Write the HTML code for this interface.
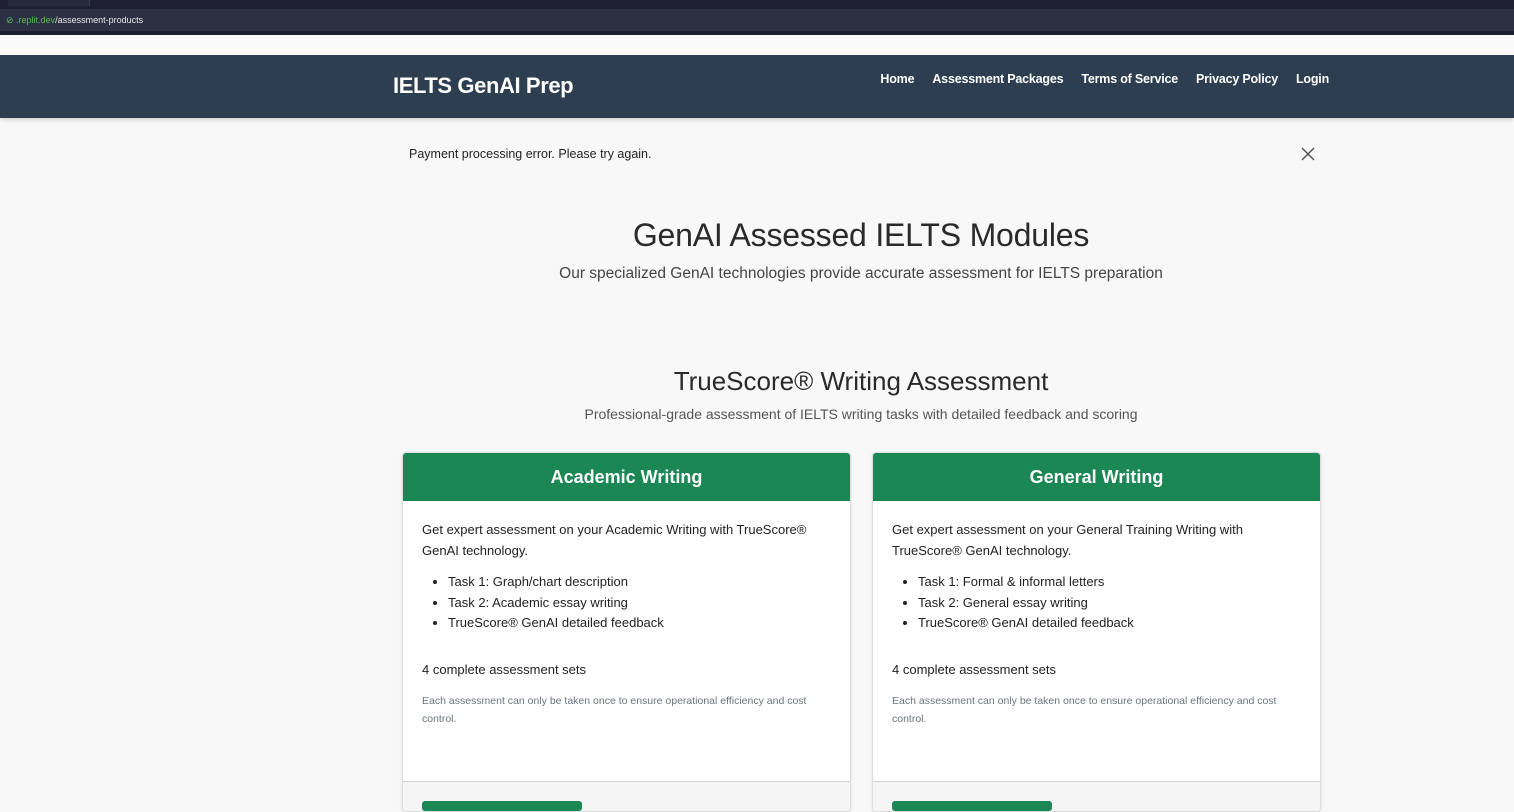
<!DOCTYPE html>
<html><head><meta charset="utf-8"><style>
*{margin:0;padding:0;box-sizing:border-box}
body{width:1514px;height:804px;overflow:hidden;background:#f8f8f8;font-family:"Liberation Sans",sans-serif;color:#222;position:relative}
.chrome{position:absolute;left:0;top:0;width:1514px;height:35px;background:#1c2030}
.tab{position:absolute;left:8px;top:0;width:82px;height:6px;background:#252a3a;border-right:1px solid #3a3f50}
.url{position:absolute;left:0;top:9px;width:1514px;height:22px;background:#2b3042;font-size:9px;line-height:22px;padding-left:6px;color:#e8e8e8}
.url .g{color:#5fb860}
.white{position:absolute;top:35px;left:0;width:1514px;height:20px;background:#fafafa}
nav{position:absolute;top:55px;left:0;width:1514px;height:63px;background:#2c3e50;box-shadow:0 2px 4px rgba(0,0,0,.15)}
.brand{position:absolute;left:393px;top:18px;color:#fff;font-weight:bold;font-size:22px;letter-spacing:-0.4px}
.links{position:absolute;top:17px;right:185px;color:#fff;font-weight:bold;font-size:12.5px;letter-spacing:-0.2px}
.links span{margin-left:18px}
.alert{position:absolute;top:147px;left:409px;font-size:12.5px;color:#222}
.x{position:absolute;left:1300px;top:146px}
.c{position:absolute;left:0;width:1722px;text-align:center}
h1{top:217px;font-size:32px;font-weight:normal;color:#2a2a2a;letter-spacing:-0.2px}
.sub{top:265px;font-size:15.5px;color:#444}
h2{top:366px;font-size:26px;font-weight:normal;color:#2a2a2a}
.sub2{top:406px;font-size:14px;color:#555}
.card{position:absolute;top:452px;width:449px;height:360px;background:#fff;border:1px solid #ddd;border-radius:4px;overflow:hidden;box-shadow:0 1px 3px rgba(0,0,0,.1)}
.hd{height:48px;background:#1a8754;color:#fff;font-weight:bold;font-size:18px;text-align:center;line-height:48px}
.bd{padding:18px 30px 0 19px;font-size:13px;color:#222;line-height:21px}
.bd ul{margin:11px 0 0 26px;line-height:20.5px}
.sets{margin-top:25px}
.note{margin-top:12px;font-size:10.5px;color:#6c757d;line-height:18px;padding-right:0;margin-right:-12px}
.ft{position:absolute;top:328px;left:0;width:100%;height:40px;background:#f5f5f5;border-top:1px solid #d0d0d0}
.btn{position:absolute;left:19px;top:19px;width:160px;height:10px;background:#1a8754;border-radius:3px}
</style></head><body>
<div class="chrome"><div class="tab"></div><div class="url"><span class="g">⊘ .replit.dev</span>/assessment-products</div></div>
<div class="white"></div>
<nav><div class="brand">IELTS GenAI Prep</div>
<div class="links"><span>Home</span><span>Assessment Packages</span><span>Terms of Service</span><span>Privacy Policy</span><span>Login</span></div></nav>
<div class="alert">Payment processing error. Please try again.</div>
<svg class="x" width="16" height="16" viewBox="0 0 16 16"><path d="M2 2L14 14M14 2L2 14" stroke="#555" stroke-width="1.5"/></svg>
<h1 class="c">GenAI Assessed IELTS Modules</h1>
<div class="c sub">Our specialized GenAI technologies provide accurate assessment for IELTS preparation</div>
<h2 class="c">TrueScore® Writing Assessment</h2>
<div class="c sub2">Professional-grade assessment of IELTS writing tasks with detailed feedback and scoring</div>
<div class="card" style="left:402px"><div class="hd">Academic Writing</div><div class="bd">
Get expert assessment on your Academic Writing with TrueScore® GenAI technology.
<ul><li>Task 1: Graph/chart description</li><li>Task 2: Academic essay writing</li><li>TrueScore® GenAI detailed feedback</li></ul>
<div class="sets">4 complete assessment sets</div>
<div class="note">Each assessment can only be taken once to ensure operational efficiency and cost control.</div></div>
<div class="ft"><div class="btn"></div></div></div>
<div class="card" style="left:872px"><div class="hd">General Writing</div><div class="bd">
Get expert assessment on your General Training Writing with TrueScore® GenAI technology.
<ul><li>Task 1: Formal &amp; informal letters</li><li>Task 2: General essay writing</li><li>TrueScore® GenAI detailed feedback</li></ul>
<div class="sets">4 complete assessment sets</div>
<div class="note">Each assessment can only be taken once to ensure operational efficiency and cost control.</div></div>
<div class="ft"><div class="btn"></div></div></div>
</body></html>
